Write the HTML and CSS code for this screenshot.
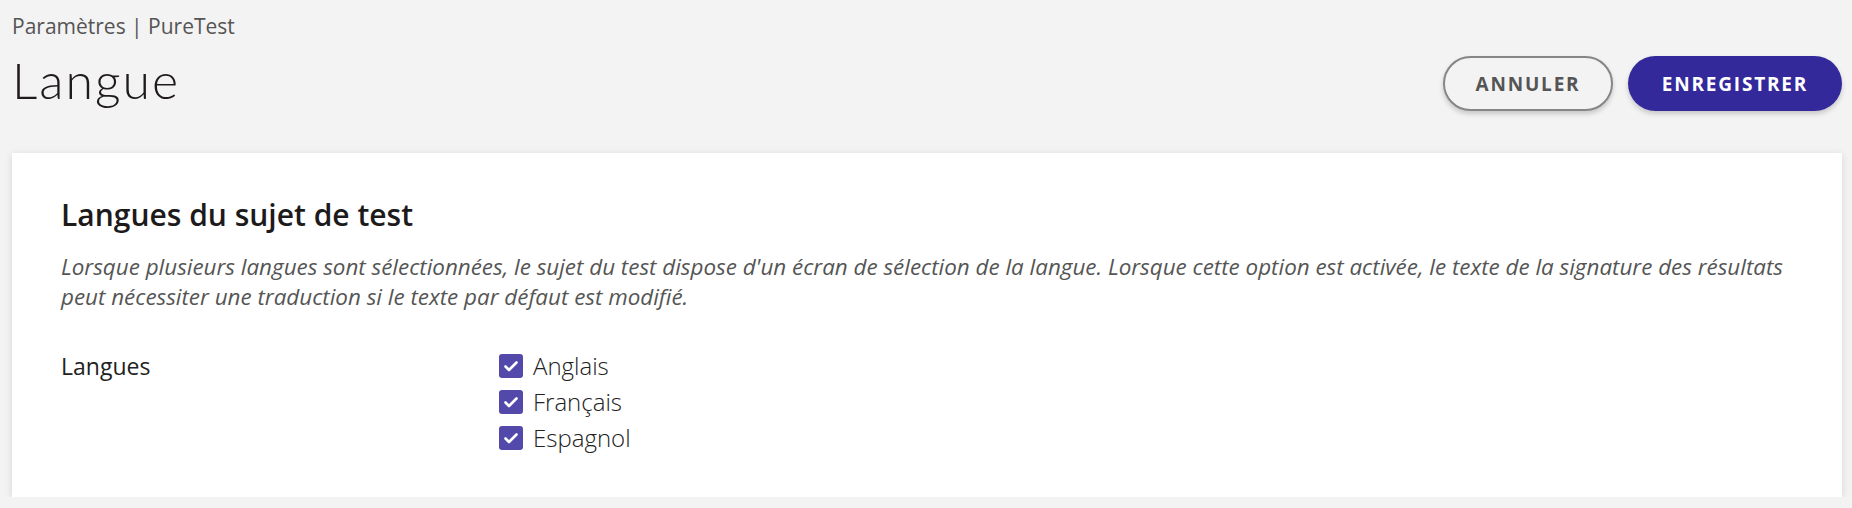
FILE: index.html
```html
<!DOCTYPE html>
<html lang="fr">
<head>
  <meta charset="UTF-8">
  <title>Langue | PureTest</title>
  <link rel="stylesheet" href="styles.css">
</head>
<body>

  <div class="entete">
    <div>
      <div class="fil">Paramètres | PureTest</div>
      <h1>Langue</h1>
    </div>
    <div class="actions">
      <button class="btn btn-annuler">Annuler</button>
      <button class="btn btn-enregistrer">Enregistrer</button>
    </div>
  </div>

  <div class="carte">
    <h2>Langues du sujet de test</h2>
    <p class="aide">Lorsque plusieurs langues sont sélectionnées, le sujet du test dispose d'un écran de sélection de la langue. Lorsque cette option est activée, le texte de la signature des résultats peut nécessiter une traduction si le texte par défaut est modifié.</p>

    <div class="ligne">
      <div class="etiquette">Langues</div>
      <div class="options">
        <label class="option"><span class="case"><svg viewBox="0 0 24 24" width="24" height="24"><path d="M6.5 12.5l3.5 3.5 7.5-7.5" fill="none" stroke="#fff" stroke-width="2.6" stroke-linecap="round" stroke-linejoin="round"/></svg></span>Anglais</label>
        <label class="option"><span class="case"><svg viewBox="0 0 24 24" width="24" height="24"><path d="M6.5 12.5l3.5 3.5 7.5-7.5" fill="none" stroke="#fff" stroke-width="2.6" stroke-linecap="round" stroke-linejoin="round"/></svg></span>Français</label>
        <label class="option"><span class="case"><svg viewBox="0 0 24 24" width="24" height="24"><path d="M6.5 12.5l3.5 3.5 7.5-7.5" fill="none" stroke="#fff" stroke-width="2.6" stroke-linecap="round" stroke-linejoin="round"/></svg></span>Espagnol</label>
      </div>
    </div>
  </div>

</body>
</html>
```

FILE: styles.css
```css
body {
  margin: 0;
  padding: 0 10px 0 12px;
  background: #f3f3f3;
  font-family: "Open Sans", sans-serif;
  color: #222;
}
.entete {
  display: flex;
  justify-content: space-between;
  align-items: flex-start;
}
.fil {
  margin-top: 12px;
  font-size: 21px;
  line-height: 28px;
  color: #555;
}
h1 {
  margin: 10px 0 0;
  font-family: Lato, sans-serif;
  font-weight: 300;
  font-size: 50px;
  line-height: 60px;
  letter-spacing: 2px;
  color: #1f1a1c;
}
.actions {
  display: flex;
  gap: 15px;
  margin-top: 56px;
}
.btn {
  height: 55px;
  border-radius: 28px;
  font-family: "Open Sans", sans-serif;
  font-weight: 700;
  font-size: 19px;
  letter-spacing: 1.8px;
  text-transform: uppercase;
  cursor: pointer;
  box-shadow: 0 3px 5px rgba(0, 0, 0, 0.18);
}
.btn-annuler {
  width: 170px;
  background: #f3f3f3;
  color: #555;
  border: 2px solid #868686;
}
.btn-enregistrer {
  width: 214px;
  background: #33299b;
  color: #fff;
  border: none;
}
.carte {
  margin-top: 42px;
  background: #fff;
  padding: 41px 48px 41px 49px;
  box-shadow: 0 2px 8px rgba(0, 0, 0, 0.12);
}
h2 {
  margin: 0;
  font-size: 30px;
  font-weight: 600;
  line-height: 41px;
  color: #1d1a1c;
}
.aide {
  margin: 17px 0 0;
  font-style: italic;
  font-size: 22.4px;
  line-height: 29.5px;
  color: #555;
}
.ligne {
  display: flex;
  margin-top: 37px;
}
.etiquette {
  width: 438px;
  font-size: 23px;
  line-height: 36px;
}
.options {
  display: flex;
  flex-direction: column;
}
.option {
  display: flex;
  align-items: center;
  gap: 10px;
  font-size: 24px;
  font-weight: 300;
  line-height: 36px;
  color: #222;
}
.case {
  width: 24px;
  height: 24px;
  border-radius: 3px;
  background: #5249ab;
  display: flex;
}
```
